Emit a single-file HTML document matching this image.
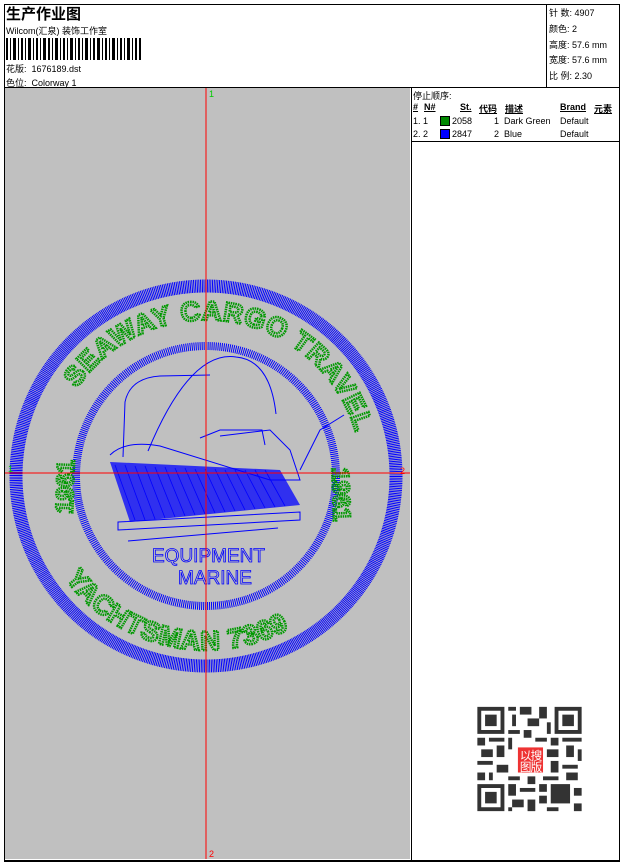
<!DOCTYPE html>
<html><head><meta charset="utf-8"><style>
*{margin:0;padding:0}
body{width:620px;height:861px;background:#fff;position:relative;overflow:hidden;font-family:"Liberation Sans","Noto Sans CJK SC",sans-serif;font-size:9px;color:#000}
.a{position:absolute;white-space:nowrap}
</style></head><body>
<div class="a" style="left:4px;top:4px;width:614px;height:855px;border:1px solid #000;border-width:1px 2px 2px 1px"></div>
<div class="a" style="left:546px;top:4px;width:1px;height:84px;background:#000"></div>
<div class="a" style="left:4px;top:87px;width:615px;height:1px;background:#000"></div>
<div class="a" style="left:411px;top:87px;width:1px;height:773px;background:#000"></div>
<div class="a" style="left:411px;top:141px;width:208px;height:1px;background:#000"></div>
<div class="a" style="left:6px;top:3px;font-size:15px;font-weight:bold">生产作业图</div>
<div class="a" style="left:6px;top:24px">Wilcom(汇泉) 装饰工作室</div>
<svg class="a" style="left:6px;top:38px" width="136" height="24">
<g fill="#000">
<rect x="0" y="0" width="2" height="22"/><rect x="4" y="0" width="1" height="22"/><rect x="7" y="0" width="3" height="22"/><rect x="12" y="0" width="1" height="22"/><rect x="15" y="0" width="2" height="22"/><rect x="19" y="0" width="1" height="22"/><rect x="22" y="0" width="3" height="22"/><rect x="27" y="0" width="1" height="22"/><rect x="30" y="0" width="2" height="22"/><rect x="34" y="0" width="1" height="22"/><rect x="37" y="0" width="3" height="22"/><rect x="42" y="0" width="2" height="22"/><rect x="46" y="0" width="1" height="22"/><rect x="49" y="0" width="3" height="22"/><rect x="54" y="0" width="1" height="22"/><rect x="57" y="0" width="2" height="22"/><rect x="61" y="0" width="1" height="22"/><rect x="64" y="0" width="3" height="22"/><rect x="69" y="0" width="1" height="22"/><rect x="72" y="0" width="2" height="22"/><rect x="76" y="0" width="1" height="22"/><rect x="79" y="0" width="3" height="22"/><rect x="84" y="0" width="1" height="22"/><rect x="87" y="0" width="2" height="22"/><rect x="91" y="0" width="3" height="22"/><rect x="96" y="0" width="1" height="22"/><rect x="99" y="0" width="2" height="22"/><rect x="103" y="0" width="1" height="22"/><rect x="106" y="0" width="3" height="22"/><rect x="111" y="0" width="1" height="22"/><rect x="114" y="0" width="2" height="22"/><rect x="118" y="0" width="1" height="22"/><rect x="121" y="0" width="3" height="22"/><rect x="126" y="0" width="1" height="22"/><rect x="129" y="0" width="2" height="22"/><rect x="133" y="0" width="2" height="22"/>
</g></svg>
<div class="a" style="left:6px;top:62px">花版:&nbsp; 1676189.dst</div>
<div class="a" style="left:6px;top:76px">色位:&nbsp; Colorway 1</div>
<div class="a" style="left:549px;top:6px;line-height:15.8px">针 数: 4907<br>颜色: 2<br>高度: 57.6 mm<br>宽度: 57.6 mm<br>比 例: 2.30</div>
<div class="a" style="left:413px;top:89px">停止顺序:</div>
<div class="a" style="left:413px;top:102px;font-weight:bold;text-decoration:underline">#</div>
<div class="a" style="left:424px;top:102px;font-weight:bold;text-decoration:underline">N#</div>
<div class="a" style="left:460px;top:102px;font-weight:bold;text-decoration:underline">St.</div>
<div class="a" style="left:479px;top:102px;font-weight:bold;text-decoration:underline">代码</div>
<div class="a" style="left:505px;top:102px;font-weight:bold;text-decoration:underline">描述</div>
<div class="a" style="left:560px;top:102px;font-weight:bold;text-decoration:underline">Brand</div>
<div class="a" style="left:594px;top:102px;font-weight:bold;text-decoration:underline">元素</div>
<div class="a" style="left:413px;top:116px">1. 1</div>
<div class="a" style="left:440px;top:116px;width:8px;height:8px;background:#080;border:1px solid #000"></div>
<div class="a" style="left:452px;top:116px">2058</div><div class="a" style="left:494px;top:116px">1&nbsp; Dark Green</div><div class="a" style="left:560px;top:116px">Default</div>
<div class="a" style="left:413px;top:129px">2. 2</div>
<div class="a" style="left:440px;top:129px;width:8px;height:8px;background:#00f;border:1px solid #000"></div>
<div class="a" style="left:452px;top:129px">2847</div><div class="a" style="left:494px;top:129px">2&nbsp; Blue</div><div class="a" style="left:560px;top:129px">Default</div>

<svg class="a" style="left:5px;top:88px" width="405" height="771" viewBox="5 88 405 771">
<rect x="5" y="88" width="405" height="771" fill="#c0c0c0"/>
<defs>
<path id="tp" d="M 206 476 m -156 0 a 156 156 0 1 1 312 0"/>
<path id="bp" d="M 206 476 m -174 0 a 174 174 0 0 0 348 0"/>
</defs>
<circle cx="206" cy="476" r="190" fill="none" stroke="#00f" stroke-width="13" stroke-dasharray="1 0.7"/>
<circle cx="206" cy="476" r="130" fill="none" stroke="#00f" stroke-width="8" stroke-dasharray="1 1"/>
<g font-family="Liberation Sans" font-weight="bold" font-size="27" fill="none" stroke="#090" stroke-width="2.5" stroke-dasharray="1.5 0.8">
<text letter-spacing="1"><textPath href="#tp" startOffset="19%">SEAWAY CARGO TRAVEL</textPath></text>
<text letter-spacing="1"><textPath href="#bp" startOffset="20%">YACHTSMAN 7369</textPath></text>
<text x="30" y="520" font-size="24" transform="rotate(-88 48 495)">1961</text>
<text x="330" y="520" font-size="24" transform="rotate(88 358 495)">1961</text>
</g>
<g fill="none" stroke="#00f" stroke-width="1">
<path d="M123 457 L125 402 Q130 378 160 376 L210 375"/>
<path d="M148 451 Q190 350 236 357 Q270 360 276 414"/>
<path d="M110 455 Q125 440 160 446 L270 480 L300 480 L290 450 L270 430 L220 436"/>
<path d="M200 438 L220 430 L262 430 L265 445"/>
<path d="M300 470 L320 430 L344 415"/>
<path d="M118 522 L300 512 L300 520 L118 530 Z"/>
<path d="M128 541 L278 528"/>
</g>
<path d="M110 462 L280 470 L300 505 L130 522 Z" fill="#00f" opacity="0.75"/>
<g stroke="#00f" stroke-width="0.8">
<path d="M115 465 L135 520 M125 465 L145 520 M135 466 L155 519 M145 466 L165 518 M155 467 L175 517 M165 467 L185 516 M175 468 L195 515 M185 468 L205 514 M195 469 L215 513 M205 469 L225 512 M215 469 L235 511 M225 470 L245 510 M235 470 L255 509 M245 470 L265 508 M255 470 L275 507 M265 470 L285 506"/>
</g>
<text x="152" y="562" font-family="Liberation Sans" font-size="19" fill="none" stroke="#00f" stroke-width="0.8">EQUIPMENT</text>
<text x="178" y="584" font-family="Liberation Sans" font-size="19" fill="none" stroke="#00f" stroke-width="0.8">MARINE</text>
<line x1="206" y1="88" x2="206" y2="859" stroke="#f00" stroke-width="1"/>
<line x1="5" y1="473" x2="410" y2="473" stroke="#f00" stroke-width="1"/>
<text x="209" y="97" font-size="9" fill="#0c0" font-family="Liberation Sans">1</text>
<text x="209" y="857" font-size="9" fill="#f00" font-family="Liberation Sans">2</text>
<text x="8" y="472" font-size="9" fill="#0c0" font-family="Liberation Sans">1</text>
<text x="400" y="474" font-size="9" fill="#f00" font-family="Liberation Sans">2</text>
</svg>

<svg class="a" style="left:472px;top:703px" width="115" height="112" viewBox="0 0 29 29">
<rect width="29" height="29" fill="#fff"/>
<g fill="#333">
<path d="M1 1h7v7h-7zM2 2v5h5v-5zM3 3h3v3h-3z" fill-rule="evenodd"/>
<path d="M21 1h7v7h-7zM22 2v5h5v-5zM23 3h3v3h-3z" fill-rule="evenodd"/>
<path d="M1 21h7v7h-7zM2 22v5h5v-5zM3 23h3v3h-3z" fill-rule="evenodd"/>
<rect x="9" y="1" width="2" height="1"/><rect x="12" y="1" width="3" height="2"/><rect x="17" y="1" width="2" height="3"/><rect x="10" y="3" width="1" height="3"/><rect x="14" y="4" width="3" height="2"/><rect x="19" y="5" width="1" height="3"/><rect x="9" y="7" width="3" height="1"/><rect x="13" y="7" width="2" height="2"/>
<rect x="1" y="9" width="2" height="2"/><rect x="4" y="9" width="4" height="1"/><rect x="9" y="9" width="1" height="3"/><rect x="16" y="9" width="3" height="1"/><rect x="20" y="9" width="2" height="2"/><rect x="23" y="9" width="5" height="1"/>
<rect x="2" y="12" width="3" height="2"/><rect x="6" y="11" width="2" height="3"/><rect x="11" y="12" width="2" height="1"/><rect x="19" y="12" width="3" height="2"/><rect x="24" y="11" width="2" height="3"/><rect x="27" y="12" width="1" height="3"/>
<rect x="1" y="15" width="4" height="1"/><rect x="6" y="16" width="3" height="2"/><rect x="20" y="15" width="2" height="3"/><rect x="23" y="16" width="4" height="1"/>
<rect x="1" y="18" width="2" height="2"/><rect x="4" y="18" width="1" height="2"/><rect x="9" y="19" width="3" height="1"/><rect x="14" y="19" width="2" height="2"/><rect x="18" y="19" width="4" height="1"/><rect x="24" y="18" width="3" height="2"/>
<rect x="9" y="21" width="2" height="3"/><rect x="12" y="22" width="4" height="1"/><rect x="17" y="21" width="2" height="2"/><rect x="20" y="21" width="5" height="5"/><rect x="26" y="22" width="2" height="2"/>
<rect x="10" y="25" width="3" height="2"/><rect x="14" y="25" width="2" height="3"/><rect x="17" y="24" width="2" height="2"/><rect x="26" y="26" width="2" height="2"/><rect x="9" y="27" width="1" height="1"/><rect x="19" y="27" width="3" height="1"/>
</g>
<rect x="11" y="11" width="7.5" height="7.5" fill="#fff"/>
<rect x="11.5" y="11.5" width="6.5" height="6.5" fill="#e33"/>
<text x="12" y="14.6" font-size="3" fill="#fff" font-family="Noto Sans CJK SC,sans-serif">以</text><text x="14.8" y="14.6" font-size="3" fill="#fff" font-family="Noto Sans CJK SC,sans-serif">搜</text>
<text x="12" y="17.6" font-size="3" fill="#fff" font-family="Noto Sans CJK SC,sans-serif">图</text><text x="14.8" y="17.6" font-size="3" fill="#fff" font-family="Noto Sans CJK SC,sans-serif">版</text>
</svg>
</body></html>
